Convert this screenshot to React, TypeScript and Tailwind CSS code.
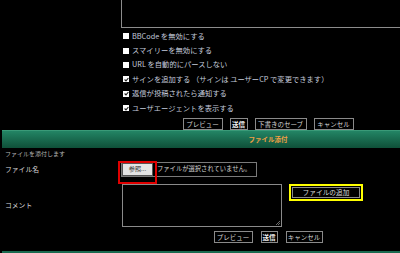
import React from "react";

const options = [
  { label: "BBCode を無効にする", checked: false },
  { label: "スマイリーを無効にする", checked: false },
  { label: "URL を自動的にパースしない", checked: false },
  { label: "サインを追加する （サインは ユーザーCP で変更できます）", checked: true },
  { label: "返信が投稿されたら通知する", checked: true },
  { label: "ユーザエージェントを表示する", checked: true },
];

function Box({ checked }: { checked: boolean }) {
  return (
    <span className="w-[6px] h-[6px] bg-white flex items-center justify-center shrink-0">
      {checked && (
        <svg width="5" height="5" viewBox="0 0 5 5">
          <path d="M0.6 2.5 L2 3.9 L4.4 1" stroke="#222" strokeWidth="1.1" fill="none" />
        </svg>
      )}
    </span>
  );
}

function Btn({ w, children, bold }: { w: string; children: React.ReactNode; bold?: boolean }) {
  return (
    <button
      className={`${w} h-[12px] border border-[#8a8a8a] bg-black text-[6.5px] leading-none flex items-center justify-center ${bold ? "font-bold text-[#f0f0f0]" : "text-[#d4d4d4]"}`}
    >
      {children}
    </button>
  );
}

export default function App() {
  return (
    <div
      className="w-[400px] h-[253px] bg-black overflow-hidden"
      style={{ fontFamily: '"Noto Sans CJK JP", "Noto Sans", sans-serif' }}
    >
      <div className="ml-[2px] w-[532px]">
        {/* options */}
        <div className="flex">
          <div className="w-[119px] shrink-0" />
          <div>
            <div className="h-[28px] w-[420px] border-x border-b border-[#8c8c8c]" />
            <div className="mt-px">
              {options.map((o) => (
                <div key={o.label} className="h-[14.4px] flex items-center gap-[3px] pl-[2px]">
                  <Box checked={o.checked} />
                  <span className="text-[7.3px] leading-none text-[#c4cbdc] whitespace-nowrap">{o.label}</span>
                </div>
              ))}
            </div>
          </div>
        </div>

        <div className="mt-[2.6px] flex justify-center gap-[7px]">
          <Btn w="w-[40px]">プレビュー</Btn>
          <Btn w="w-[18px]" bold>送信</Btn>
          <Btn w="w-[52px]">下書きのセーブ</Btn>
          <Btn w="w-[40px]">キャンセル</Btn>
        </div>

        {/* header bar */}
        <div className="h-[18px] border-t border-[#3a9a78] bg-gradient-to-b from-[#238565] to-[#0f5039] flex items-center justify-center">
          <span className="text-[6.5px] font-bold leading-none text-[#f0a044]">ファイル添付</span>
        </div>

        <div className="h-[12px] flex items-center pl-[3px] text-[6px] leading-none text-[#b4b4b4]">
          ファイルを添付します
        </div>

        {/* file row */}
        <div className="flex items-center pt-[2px]">
          <div className="w-[119px] shrink-0 pl-[3px] text-[6.8px] leading-none text-[#d6d6d6]">ファイル名</div>
          <div className="relative w-[136px] h-[15px] border border-[#7a7a7a] flex items-center">
            <span className="w-[31px] h-[13px] bg-[#e4e4e4] border border-[#555] flex items-center justify-center text-[6.2px] leading-none text-[#333]">
              参照...
            </span>
            <span className="ml-[4px] text-[6.3px] leading-none text-[#d4d4d4] whitespace-nowrap">
              ファイルが選択されていません。
            </span>
            <span className="absolute -left-[4px] -top-[2px] w-[39px] h-[23px] border-2 border-[#e00000]" />
          </div>
        </div>

        {/* comment row */}
        <div className="flex items-center mt-[7px]">
          <div className="w-[120px] shrink-0 pl-[3px] text-[6.8px] leading-none text-[#d6d6d6]">コメント</div>
          <div className="flex items-start">
            <div className="relative w-[160px] h-[43px] border border-[#8a8a8a]">
              <svg className="absolute right-[1px] bottom-[1px]" width="4" height="4" viewBox="0 0 4 4">
                <path d="M4 0 L0 4 M4 2 L2 4" stroke="#888" strokeWidth="0.8" />
              </svg>
            </div>
            <div className="ml-[7px] p-[1px] border-2 border-[#ffff00]">
              <button className="w-[68px] h-[11px] border border-[#8a8a8a] bg-black text-[6.7px] leading-none text-[#dcdcdc] flex items-center justify-center">
                ファイルの追加
              </button>
            </div>
          </div>
        </div>

        <div className="mt-[4px] flex justify-center gap-[8px]">
          <Btn w="w-[39px]">プレビュー</Btn>
          <Btn w="w-[17px]" bold>送信</Btn>
          <Btn w="w-[37px]">キャンセル</Btn>
        </div>

        <div className="mt-[8px] h-[2px] bg-[#1a6a50]" />
      </div>
    </div>
  );
}
